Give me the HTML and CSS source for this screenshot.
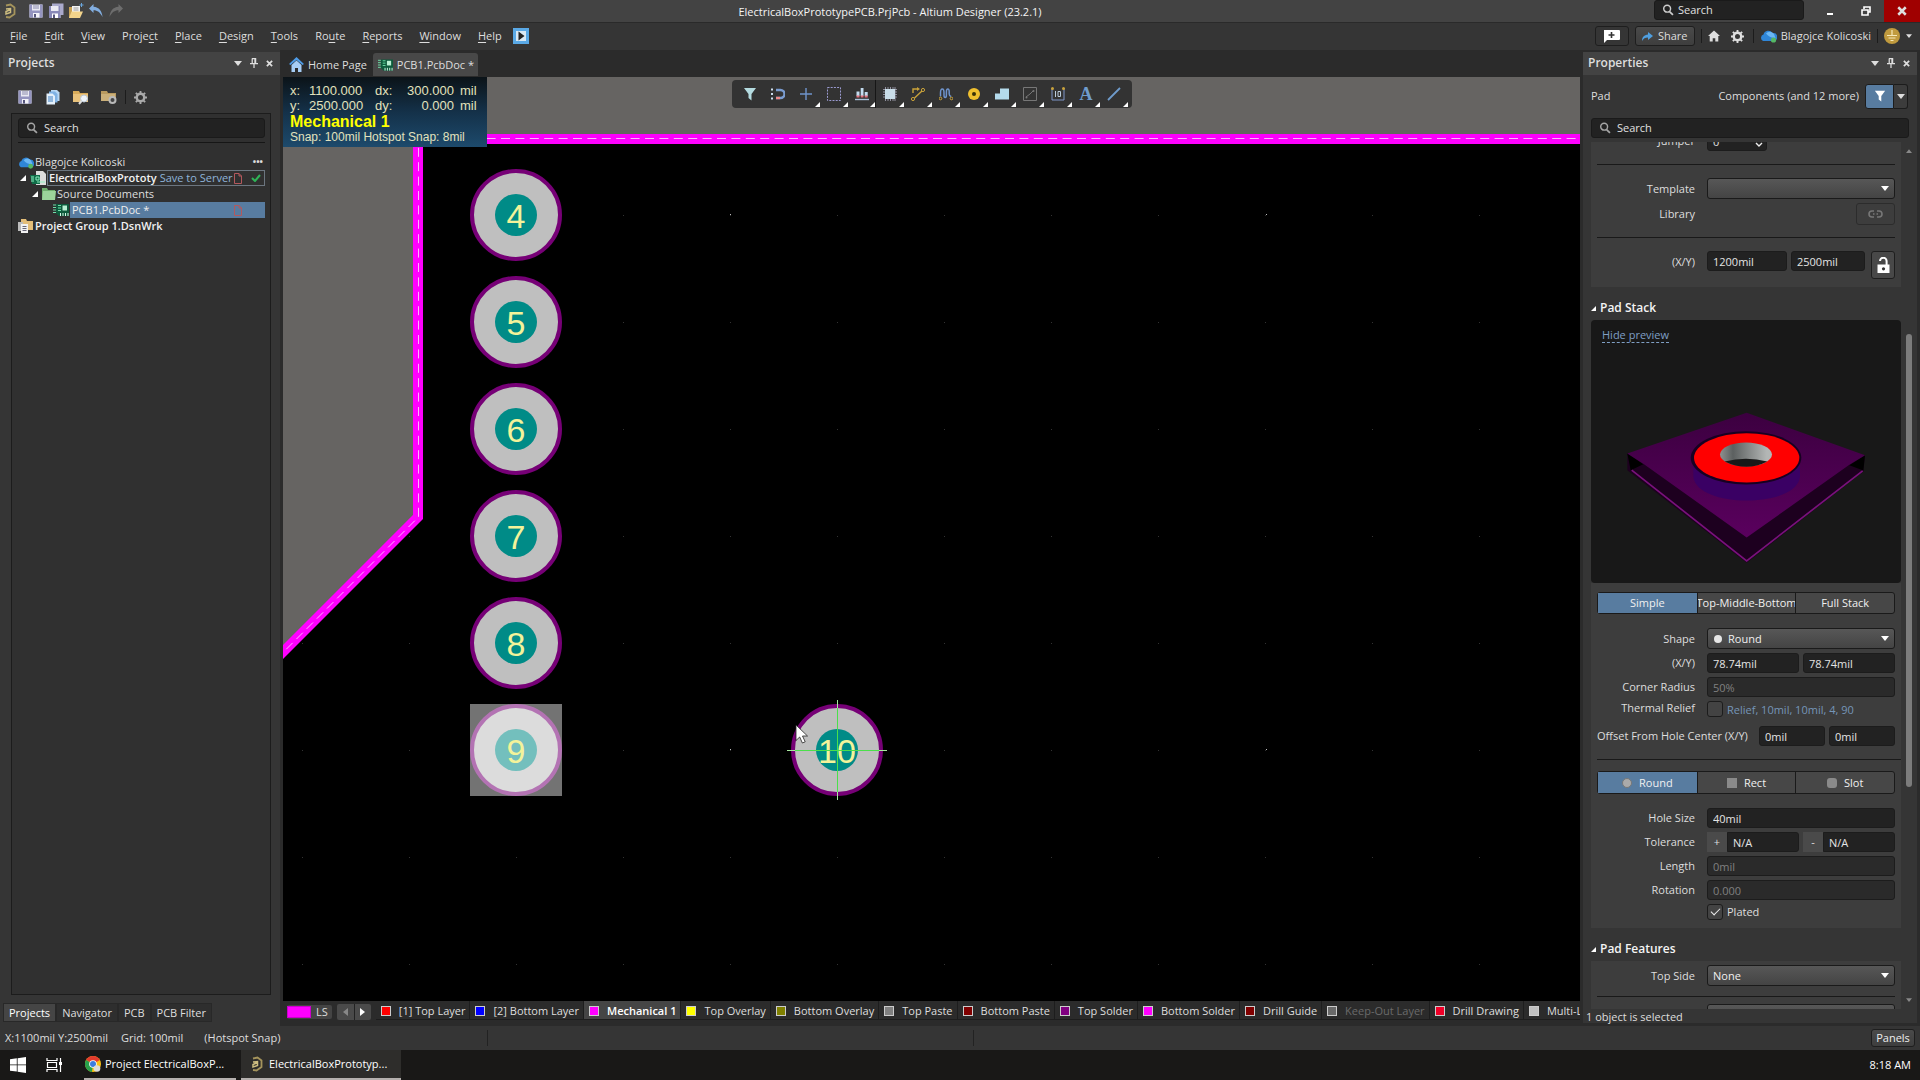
FILE: index.html
```html
<!DOCTYPE html>
<html lang="en">
<head>
<meta charset="utf-8">
<title>ElectricalBoxPrototypePCB.PrjPcb - Altium Designer (23.2.1)</title>
<link rel="stylesheet" href="styles.css">
</head>
<body>
<svg class="defs" aria-hidden="true">
  <symbol id="i-logo" viewBox="0 0 16 16"><path d="M4 2.500 8.500 1.500l4 3v6.500l-5 3.500L4 14" fill="none" stroke="#a5945c" stroke-width="1.800"/><path d="M4 6 8.500 5.500v4L4 11V8.500l4.500-2" fill="none" stroke="#cdbd80" stroke-width="1.500"/></symbol>
  <symbol id="i-save" viewBox="0 0 16 16"><path d="M1.500 1.500h13v13h-13z" fill="#e9e9f2"/><path d="M1.500 1.500h2.500v6h8v-6h2.500v13h-13z" fill="#9494bf"/><path d="M5 10h6.500v4.500H5z" fill="#f2f2f8"/><path d="M6 11h2v3.500H6z" fill="#55557c"/><path d="M5 3h6M5 5h6" stroke="#8b8bad"/></symbol>
  <symbol id="i-search" viewBox="0 0 14 14"><circle cx="6" cy="5.500" r="4" fill="none" stroke="currentColor" stroke-width="1.700"/><path d="m8.800 8.800 4 4" stroke="currentColor" stroke-width="2"/></symbol>
  <symbol id="i-down" viewBox="0 0 8 5"><path d="M0 0h8L4 5z" fill="currentColor"/></symbol>
  <symbol id="i-pin" viewBox="0 0 9 11"><path d="M2 .700h5M2.500 1v5M6 1v5M0 6.300h9M4.500 6.500V11" stroke="currentColor" stroke-width="1.400" fill="none"/><path d="M5 1h2v5H5z" fill="currentColor"/></symbol>
  <symbol id="i-x" viewBox="0 0 8 8"><path d="m1 1 6 6M7 1 1 7" stroke="currentColor" stroke-width="2"/></symbol>
  <symbol id="i-tri" viewBox="0 0 6 6"><path d="M6 0v6H0z" fill="currentColor"/></symbol>
  <symbol id="i-cloud" viewBox="0 0 17 14"><path d="M3 12a3.500 3.500 0 0 1 .500-6.500A5 5 0 0 1 12.500 4 4 4 0 0 1 14 12z" fill="#2f86d8"/><path d="M6 4.500A5 5 0 0 1 14 5l1.500 4C11 9 8 7 6 4.500z" fill="#6bb7f4"/><circle cx="13.500" cy="11" r="2.600" fill="#55b866"/></symbol>
  <symbol id="i-pcb" viewBox="0 0 16 12"><path d="M3 0h13v12H6l-3-3z" fill="#0e5a3c"/><path d="M0 1h3M0 3.500h3M0 6h3M0 8.500h3M5 1.500h3M5 4h3M5 6.500h3" stroke="#6fe0aa"/><path d="M9.500 1.500H14v5H9.500z" fill="#b9f0d3"/><path d="M7.500 9v3M10 9v3M12.500 9v3M15 9v3" stroke="#d8fbe8"/></symbol>
  <symbol id="i-doc" viewBox="0 0 8 11"><path d="M.500.500h4.500l2.500 2.500v7.500h-7zM5 .500V3h2.500" fill="none" stroke="#b4585c"/></symbol>
  <symbol id="i-home" viewBox="0 0 14 13"><path d="M7 0 0 6.500h2V13h3.500V9h3v4H12V6.500h2z" fill="currentColor"/></symbol>
  <symbol id="i-gear" viewBox="0 0 14 14"><circle cx="7" cy="7" r="4" fill="none" stroke="currentColor" stroke-width="2.600"/><path d="M7 0v3M7 11v3M0 7h3M11 7h3M2 2l2 2M10 10l2 2M12 2l-2 2M2 12l2-2" stroke="currentColor" stroke-width="2"/></symbol>
  <symbol id="i-filter" viewBox="0 0 14 14"><path d="M1 1h12L8.500 7v6.500L5.500 11V7z" fill="currentColor"/></symbol>
</svg>

<div class="app">
  <header class="titlebar">
    <div class="quick">
      <svg class="s16 logo"><use href="#i-logo"/></svg>
      <button aria-label="Save"><svg class="s16"><use href="#i-save"/></svg></button>
      <button aria-label="Save all"><svg class="s16" viewBox="0 0 16 16"><path d="M4 .500h11.500V12H4z" fill="#a9a9cc"/><path d="M1 3h11.500v12H1z" fill="#e9e9f2"/><path d="M1 3h2v5h7.500V3h2v12H1z" fill="#8989b8"/><path d="M4 10.500h6V15H4z" fill="#fff"/><path d="M5 11.500h2V15H5z" fill="#55557c"/></svg></button>
      <button aria-label="Open"><svg class="s16" viewBox="0 0 16 16"><path d="M1 4h5l1 1.500h5V15H1z" fill="#c9a255"/><path d="M4 3h8v7H4z" fill="#f3f3f3"/><path d="M5.500 5h5M5.500 7h5" stroke="#999"/><path d="M3.500 8.500H15L12 15H1z" fill="#f3d48b"/><path d="M13.500 0v4M11.500 2h4" stroke="#6aa6dc"/></svg></button>
      <button aria-label="Undo"><svg class="s16" viewBox="0 0 16 16"><path d="M5.500 1 1 5.500l4.500 4.500V7.300c4 0 6.500 2 9 6.700C14 8 11 4.200 5.500 3.800z" fill="#82aee0"/></svg></button>
      <button aria-label="Redo"><svg class="s16" viewBox="0 0 16 16"><path d="m10.500 1 4.500 4.500-4.500 4.500V7.300c-4 0-6.500 2-9 6.700C2 8 5 4.200 10.500 3.800z" fill="#6d6d6d"/></svg></button>
    </div>
    <h1>ElectricalBoxPrototypePCB.PrjPcb - Altium Designer (23.2.1)</h1>
    <div class="winctl">
      <label class="search top"><svg class="s12"><use href="#i-search"/></svg><input type="text" placeholder="Search" aria-label="Search application"></label>
      <button aria-label="Minimize"><svg width="8" height="10" viewBox="0 0 8 10"><path d="M1 8h6" stroke="#fff" stroke-width="2"/></svg></button>
      <button aria-label="Restore"><svg width="10" height="10" viewBox="0 0 10 10"><path d="M3 3V1h6v5H7" fill="none" stroke="#fff" stroke-width="1.600"/><path d="M1 4h6v5H1z" fill="none" stroke="#fff" stroke-width="1.600"/></svg></button>
      <button class="close" aria-label="Close"><svg width="10" height="10"><use href="#i-x"/></svg></button>
    </div>
  </header>

  <div class="menubar">
    <nav>
      <a href="#"><u>F</u>ile</a><a href="#"><u>E</u>dit</a><a href="#"><u>V</u>iew</a><a href="#">Proje<u>c</u>t</a><a href="#"><u>P</u>lace</a><a href="#"><u>D</u>esign</a><a href="#"><u>T</u>ools</a><a href="#">Ro<u>u</u>te</a><a href="#"><u>R</u>eports</a><a href="#"><u>W</u>indow</a><a href="#"><u>H</u>elp</a>
      <button class="play" aria-label="Tutorials"><svg width="16" height="16" viewBox="0 0 16 16"><path d="M0 0h16v16H0z" fill="#5aa9e6"/><path d="M3 3h10v10H3z" fill="#d9e9f5"/><path d="m5.500 3.500 6 4.500-6 4.500z" fill="#222"/></svg></button>
    </nav>
    <div class="account">
      <button class="btn comment" aria-label="Comment"><svg width="17" height="13" viewBox="0 0 17 13"><path d="M1 0h15q1 0 1 1v8q0 1-1 1H4l-3 3z" fill="#fff"/><path d="M8.500 2v6M5.500 5h6" stroke="#333" stroke-width="1.600"/></svg></button>
      <button class="btn share"><svg width="11" height="9" viewBox="0 0 11 9"><path d="m6 0 5 4-5 4V5.500C3 5.500 1.500 6.500 0 9c0-4 2-6 6-6.500z" fill="#4f9fe0"/></svg>Share</button>
      <i class="sep"></i>
      <button aria-label="Home"><svg width="12" height="12"><use href="#i-home"/></svg></button>
      <button class="cog" aria-label="Settings"><svg width="13" height="13"><use href="#i-gear"/></svg></button>
      <i class="sep"></i>
      <span class="user"><svg width="17" height="14"><use href="#i-cloud"/></svg>Blagojce Kolicoski</span>
      <i class="sep"></i>
      <svg width="16" height="16" viewBox="0 0 16 16"><circle cx="8" cy="8" r="8" fill="#c09a3e"/><path d="M8 2v5M3 7.500h10M4.500 10h7M6.500 12.500h3" stroke="#f6e8b8" stroke-width="1.200"/></svg>
      <button aria-label="Account menu"><svg width="6" height="4"><use href="#i-down"/></svg></button>
    </div>
  </div>

  <main>
    <aside class="left">
      <section class="panel">
        <header class="phead"><h2>Projects</h2>
          <button aria-label="Panel menu"><svg width="8" height="5"><use href="#i-down"/></svg></button>
          <button aria-label="Pin"><svg width="8" height="10"><use href="#i-pin"/></svg></button>
          <button aria-label="Close panel"><svg width="7" height="7"><use href="#i-x"/></svg></button>
        </header>
        <div class="ptools">
          <button aria-label="Save project"><svg class="s16"><use href="#i-save"/></svg></button>
          <button aria-label="Compile"><svg class="s16" viewBox="0 0 16 16"><path d="M6 1h6l2.500 2.500V12H6z" fill="#b9d7f2"/><path d="M4 2.500h6L12.500 5v8.500H4z" fill="#7fb2e4"/><path d="M1.500 4.500h6L10 7v8.500H1.500z" fill="#e4f0fb"/><path d="M3 8h5M3 10h5M3 12h5" stroke="#3f7fc0"/></svg></button>
          <button aria-label="Explore folder"><svg class="s16" viewBox="0 0 16 16"><path d="M0 2h6l1 2h8v9H0z" fill="#d8ab5a"/><path d="M0 5h15v8H0z" fill="#e9c27c"/><circle cx="11" cy="9.500" r="3.500" fill="#eef4fa" stroke="#b9c6d4"/><path d="M8.500 12 6 15" stroke="#ddd" stroke-width="2"/></svg></button>
          <button aria-label="Folder options"><svg class="s16" viewBox="0 0 16 16"><path d="M0 2h6l1 2h8v8H0z" fill="#b99a5f"/><path d="M0 5h14v7H0z" fill="#cbb07a"/><circle cx="11.500" cy="11" r="3" fill="#444" stroke="#b9b9b9" stroke-width="2"/></svg></button>
          <i class="sep"></i>
          <button class="dim" aria-label="Project settings"><svg width="13" height="13"><use href="#i-gear"/></svg></button>
        </div>
        <div class="treebox">
          <label class="search"><svg class="s12"><use href="#i-search"/></svg><input type="text" placeholder="Search" aria-label="Search projects"></label>
          <hr>
          <ul class="tree">
            <li><svg width="16" height="13"><use href="#i-cloud"/></svg><span>Blagojce Kolicoski</span><b class="dots">•••</b></li>
            <li class="l1"><svg class="tw"><use href="#i-tri"/></svg><svg width="16" height="14" viewBox="0 0 16 14"><path d="M6 0h7l3 3v11H6z" fill="#ddd"/><path d="M0 4h10v9H2z" fill="#0f6d49"/><path d="M1 6h3M1 8h3M1 10h3M6 6h3v3H6zM7 11h8" stroke="#8ff0c0" fill="none"/></svg><span class="boxed"><strong>ElectricalBoxPrototy</strong><em>Save to Server</em><svg class="dc"><use href="#i-doc"/></svg><svg width="10" height="8" viewBox="0 0 10 8"><path d="m1 4 3 3 5-6" fill="none" stroke="#2fb457" stroke-width="2"/></svg></span></li>
            <li class="l2"><svg class="tw"><use href="#i-tri"/></svg><svg width="14" height="12" viewBox="0 0 14 12"><path d="M0 0h5l1 2h7v10H0z" fill="#6fae6f"/><path d="M1 3h13l-1 9H0z" fill="#9bd39b"/></svg><span>Source Documents</span></li>
            <li class="l3"><svg width="16" height="12"><use href="#i-pcb"/></svg><span class="sel">PCB1.PcbDoc *<svg class="dc"><use href="#i-doc"/></svg></span></li>
            <li><svg width="16" height="14" viewBox="0 0 16 14"><path d="M3 0h5l1 2h6v9H3z" fill="#e3bd78"/><path d="M0 3h5v9H0z" fill="#bbb"/><path d="M3 5h7v9H3z" fill="#f2f2f2"/><path d="M4.500 7.500h4M4.500 9.500h4M4.500 11.500h4" stroke="#667"/></svg><strong>Project Group 1.DsnWrk</strong></li>
          </ul>
        </div>
      </section>
      <div class="ptabs"><button class="on">Projects</button><button>Navigator</button><button>PCB</button><button>PCB Filter</button></div>
    </aside>

    <section class="center">
      <div class="doctabs">
        <button><svg width="15" height="15" viewBox="0 0 15 15"><path d="M7.500 0 0 7l1.500 1 6-5 6 5L15 7z" fill="#4e9be6"/><path d="M2.500 8l5-4.500 5 4.500v7H9v-4H6v4H2.500z" fill="#a6cdf5"/></svg>Home Page</button>
        <button class="on"><svg width="15" height="12"><use href="#i-pcb"/></svg>PCB1.PcbDoc *</button>
      </div>
      <div class="canvas">
        <svg class="board" viewBox="283 77 1297 924" preserveAspectRatio="xMinYMin slice">
          <defs>
            <pattern id="grid" x="302" y="215" width="107" height="107" patternUnits="userSpaceOnUse"><path d="M0 0h1v1H0z" fill="#333"/></pattern>
            <g id="pad"><circle r="44" fill="#bfbfbf" stroke="#760076" stroke-width="4"/><circle r="21" fill="#008b87"/></g>
          </defs>
          <path d="M283 77h1297v924H283z" fill="#000"/>
          <path d="M283 77h1297v62H418v378L283 652z" fill="#666462"/>
          <path d="M418 139h1162v862H283V652l135-135z" fill="url(#grid)"/>
          <path d="M1590 139H418v378L278 657" fill="none" stroke="#f0f" stroke-width="10"/>
          <path d="M1590 138.500H418.500V517L278 657.500" fill="none" stroke="#ffb4ff" stroke-dasharray="9 5.400"/>
          <path d="M730 214h1v1h-1zM1266 214h1v1h-1zM730 749h1v1h-1zM1266 749h1v1h-1z" fill="#bbb"/>
          <g class="pads">
            <g transform="translate(516 215)"><use href="#pad"/><text y="13">4</text></g>
            <g transform="translate(516 322)"><use href="#pad"/><text y="13">5</text></g>
            <g transform="translate(516 429)"><use href="#pad"/><text y="13">6</text></g>
            <g transform="translate(516 536)"><use href="#pad"/><text y="13">7</text></g>
            <g transform="translate(516 643)"><use href="#pad"/><text y="13">8</text></g>
            <g transform="translate(516 750)"><use href="#pad"/><path d="M-46-46h92v92h-92z" fill="#fff" opacity=".45"/><text y="13">9</text></g>
            <g transform="translate(837 750)"><use href="#pad"/><text y="13">10</text><path d="M-50 .500H50M.500-50V50" stroke="#a8e8a0"/><path d="M-42 .500H42M.500-42V42" stroke="#4be04b"/></g>
          </g>
          <path d="M796 725v15.500l3.700-3.500 2.700 6 2.800-1.200-2.700-5.800h5z" fill="#fff" stroke="#222" stroke-width=".800"/>
        </svg>
        <div class="hud">
          <dl><dt>x:</dt><dd>1100.000</dd><dt>dx:</dt><dd>300.000</dd><dd>mil</dd><dt>y:</dt><dd>2500.000</dd><dt>dy:</dt><dd>0.000</dd><dd>mil</dd></dl>
          <strong>Mechanical 1</strong>
          <small>Snap: 100mil Hotspot Snap: 8mil</small>
        </div>
        <div class="tools">
          <button class="nt" aria-label="Filter"><svg viewBox="0 0 14 14" color="#b4dbe0"><use href="#i-filter"/></svg></button>
          <button class="nt" aria-label="Snap"><svg viewBox="0 0 14 14"><path d="M5 3h4.500a4 4 0 0 1 0 8H5" fill="none" stroke="#7a9cd0" stroke-width="2.400"/><path d="M9 11H5" stroke="#e88" stroke-width="2.400"/><path d="M0 2.500h2M0 7h2M0 11.500h2" stroke="#cde" stroke-width="2"/></svg></button>
          <button aria-label="Move"><svg viewBox="0 0 14 14"><path d="M7 1v12M1 7h12" stroke="#6f94cc" stroke-width="1.400"/></svg></button>
          <button aria-label="Select"><svg viewBox="0 0 14 14"><path d="M.500.500h13v13H.500z" fill="none" stroke="#9a9ad0" stroke-dasharray="2 1.200"/></svg></button>
          <button class="div" aria-label="Align"><svg viewBox="0 0 14 14"><path d="M1.500 4.500h3V9h-3zM5.700 1h2.800v8H5.700zM9.700 5h3v4h-3z" fill="#c3dcf0"/><path d="M1.500 9.500h3M5.700 9.500h2.800M9.700 9.500h3" stroke="#e0707c" stroke-width="2"/><path d="M0 12.500h14" stroke="#a9c3dc" stroke-width="1.400"/></svg></button>
          <button aria-label="Component"><svg viewBox="0 0 14 14"><path d="M0 2.500h14M0 5h14M0 7.500h14M0 10h14M2.500 0v14M5 0v14M7.500 0v14M10 0v14M12 0v14" stroke="#aab" stroke-width=".800"/><path d="M2 2h10v10H2z" fill="#c9dde8"/></svg></button>
          <button aria-label="Route"><svg viewBox="0 0 14 14"><path d="M2 6V2h5M3.500 11 11 4" fill="none" stroke="#c9a23a" stroke-width="1.400"/><path d="m6 0 3 2-3 2z" fill="#c9a23a"/><circle cx="2" cy="12" r="1.600" fill="none" stroke="#c9a23a"/><circle cx="12" cy="3" r="1.600" fill="none" stroke="#c9a23a"/></svg></button>
          <button aria-label="Tune"><svg viewBox="0 0 14 14"><path d="M1.500 9.500V6q0-4 1.800-4T5 6v2q0 2.500 1.200 2.500T7.400 8V5q0-3 1.400-3t1.400 3v2q0 2 2 2.500" fill="none" stroke="#6f94cc" stroke-width="1.500"/><circle cx="1.500" cy="11.500" r="1.300" fill="none" stroke="#c9a23a"/><circle cx="12.500" cy="11.500" r="1.300" fill="none" stroke="#c9a23a"/></svg></button>
          <button aria-label="Via"><svg viewBox="0 0 14 14"><circle cx="7" cy="7" r="6" fill="#f0c02e"/><circle cx="7" cy="7" r="2" fill="#3a3208"/></svg></button>
          <button aria-label="Polygon"><svg viewBox="0 0 14 14"><path d="M0 12.500V6.500h5V1.500h9v11z" fill="#b4dbec"/></svg></button>
          <button aria-label="Room"><svg viewBox="0 0 14 14"><path d="M.500.500h13v13H.500zM3 10l4-3 3-3" fill="none" stroke="#777"/><circle cx="3.500" cy="10.500" r="1" fill="#777"/><circle cx="10.500" cy="4" r="1" fill="#777"/></svg></button>
          <button aria-label="Dimension"><svg viewBox="0 0 14 14"><path d="M1 1v12h12V1" fill="none" stroke="#7f96c8"/><path d="M4.500 4v6M7 4.500h2.500v5H7z" fill="none" stroke="#bcd"/><circle cx="1.500" cy="1.500" r="1.500" fill="#c9a23a"/><circle cx="12.500" cy="1.500" r="1.500" fill="#c9a23a"/></svg></button>
          <button class="ta" aria-label="Text">A</button>
          <button aria-label="Line"><svg viewBox="0 0 14 14"><path d="M1 13 13 1" stroke="#6f9ccc" stroke-width="1.800"/></svg></button>
        </div>
      </div>
      <div class="layers">
        <button class="ls"><i class="c-m"></i>LS</button>
        <span class="arrows"><button aria-label="Previous layer" class="off"><svg width="5" height="8" viewBox="0 0 5 8"><path d="M5 0v8L0 4z" fill="currentColor"/></svg></button><button aria-label="Next layer"><svg width="5" height="8" viewBox="0 0 5 8"><path d="M0 0v8l5-4z" fill="currentColor"/></svg></button></span>
        <button class="lay"><i class="c-red"></i>[1] Top Layer</button>
        <button class="lay"><i class="c-blue"></i>[2] Bottom Layer</button>
        <button class="lay on"><i class="c-m"></i>Mechanical 1</button>
        <button class="lay"><i class="c-yel"></i>Top Overlay</button>
        <button class="lay"><i class="c-olive"></i>Bottom Overlay</button>
        <button class="lay"><i class="c-gray"></i>Top Paste</button>
        <button class="lay"><i class="c-mar"></i>Bottom Paste</button>
        <button class="lay"><i class="c-pur"></i>Top Solder</button>
        <button class="lay"><i class="c-m"></i>Bottom Solder</button>
        <button class="lay"><i class="c-mar"></i>Drill Guide</button>
        <button class="lay off"><i class="c-dim"></i>Keep-Out Layer</button>
        <button class="lay"><i class="c-crim"></i>Drill Drawing</button>
        <button class="lay"><i class="c-sil"></i>Multi-Layer</button>
      </div>
    </section>

    <aside class="panel props">
      <header class="phead"><h2>Properties</h2>
        <button aria-label="Panel menu"><svg width="8" height="5"><use href="#i-down"/></svg></button>
        <button aria-label="Pin"><svg width="8" height="10"><use href="#i-pin"/></svg></button>
        <button aria-label="Close panel"><svg width="7" height="7"><use href="#i-x"/></svg></button>
      </header>
      <div class="scope"><span>Pad</span><span class="what">Components (and 12 more)</span><button class="flt" aria-label="Selection filter"><svg width="12" height="12"><use href="#i-filter"/></svg></button><button class="fdd" aria-label="Filter options"><svg width="8" height="5"><use href="#i-down"/></svg></button></div>
      <label class="search"><svg class="s12"><use href="#i-search"/></svg><input type="text" placeholder="Search" aria-label="Search properties"></label>
      <div class="scroll">
        <div class="body">
          <div class="sect first">
            <div class="row"><label for="jump">Jumper</label><span class="spin"><input id="jump" type="text" value="0"><svg width="8" height="5" viewBox="0 0 8 5"><path d="m1 1 3 3 3-3" fill="none" stroke="#eee" stroke-width="1.400"/></svg></span></div>
            <hr>
            <div class="row"><label for="tpl">Template</label><span class="dd"><select id="tpl"><option></option></select><svg width="8" height="5"><use href="#i-down"/></svg></span></div>
            <div class="row lib"><label for="libb">Library</label><button id="libb" class="link" aria-label="Library link"><svg width="15" height="8" viewBox="0 0 15 8"><path d="M6 1H4a3 3 0 0 0 0 6h2M9 1h2a3 3 0 0 1 0 6H9M5 4h1.500M8.500 4H10" fill="none" stroke="#777" stroke-width="1.600"/></svg></button></div>
            <hr>
            <div class="row xy"><label for="px">(X/Y)</label><input id="px" type="text" value="1200mil"><input class="y1" type="text" value="2500mil" aria-label="Y"><button class="lock" aria-label="Unlock"><svg width="13" height="17" viewBox="0 0 13 17"><path d="M3 4a3.300 3.300 0 0 1 6.600 0v4" fill="none" stroke="#fff" stroke-width="2"/><path d="M.500 7.500h12V16H.500z" fill="#fff"/><circle cx="6.500" cy="11.800" r="1.600" fill="#333"/></svg></button></div>
          </div>
          <h3><svg class="tw"><use href="#i-tri"/></svg>Pad Stack</h3>
          <div class="preview">
            <a href="#">Hide preview</a>
            <svg viewBox="93 90 930 788">
              <defs>
                <linearGradient id="top" x1="0" y1="0" x2="0" y2="1"><stop offset="0" stop-color="#3c0040"/><stop offset="1" stop-color="#5a005e"/></linearGradient>
                <linearGradient id="barrel"><stop offset="0" stop-color="#8d9190"/><stop offset=".25" stop-color="#5c6060"/><stop offset=".9" stop-color="#b3b6b5"/></linearGradient>
              </defs>
              <path d="M202 490v50l358 278 350-275 5-48z" fill="#1d001f"/>
              <path d="M202 490l10 50 38-18zM915 495l-5 46-42-16z" fill="#000"/>
              <path d="M215 540l345 272 348-270" fill="none" stroke="#7a117c" stroke-width="5"/>
              <path d="M560 368 202 490l50 32 308 220 308-218 47-29z" fill="url(#top)"/>
              <path d="M400 510v50c10 95 310 95 320 0v-50z" fill="#3a0064"/>
              <ellipse cx="558" cy="503" rx="166" ry="80" fill="#180022"/>
              <ellipse cx="560" cy="503" rx="158" ry="74" fill="#f00"/>
              <ellipse cx="558" cy="493" rx="78" ry="36" fill="url(#barrel)"/>
              <path d="M494 514q64-16 128 0-62 32-128 0z" fill="#181818"/>
            </svg>
          </div>
          <div class="sect stack">
            <div class="seg"><button class="on">Simple</button><button>Top-Middle-Bottom</button><button>Full Stack</button></div>
            <div class="row"><label for="shape">Shape</label><span class="dd dot"><select id="shape"><option>Round</option></select><svg width="8" height="5"><use href="#i-down"/></svg></span></div>
            <div class="row"><label for="sx">(X/Y)</label><input id="sx" type="text" value="78.74mil"><input type="text" value="78.74mil" aria-label="Size Y"></div>
            <div class="row"><label for="cr">Corner Radius</label><input id="cr" type="text" value="50%" disabled></div>
            <div class="row chk"><label for="tr">Thermal Relief</label><input id="tr" type="checkbox"><a href="#">Relief, 10mil, 10mil, 4, 90</a></div>
            <div class="row off"><label for="ox">Offset From Hole Center (X/Y)</label><input id="ox" type="text" value="0mil"><input type="text" value="0mil" aria-label="Offset Y"></div>
            <hr>
            <div class="seg hole"><button class="on"><i class="rd"></i>Round</button><button><i></i>Rect</button><button><i class="sl"></i>Slot</button></div>
            <div class="row"><label for="hs">Hole Size</label><input id="hs" type="text" value="40mil"></div>
            <div class="row tol"><label for="tp">Tolerance</label><span><button>+</button><input id="tp" type="text" value="N/A"></span><span><button>-</button><input type="text" value="N/A" aria-label="Minus tolerance"></span></div>
            <div class="row"><label for="ln">Length</label><input id="ln" type="text" value="0mil" disabled></div>
            <div class="row"><label for="rt">Rotation</label><input id="rt" type="text" value="0.000" disabled></div>
            <div class="row plated"><input id="pl" type="checkbox" checked><label for="pl">Plated</label></div>
          </div>
          <h3><svg class="tw"><use href="#i-tri"/></svg>Pad Features</h3>
          <div class="sect feat">
            <div class="row"><label for="ts">Top Side</label><span class="dd"><select id="ts"><option>None</option></select><svg width="8" height="5"><use href="#i-down"/></svg></span></div>
            <hr>
            <div class="row next"><span class="dd"><select aria-label="Bottom Side"><option></option></select></span></div>
          </div>
        </div>
        <div class="bar"><svg width="6" height="4" viewBox="0 0 8 5"><path d="M0 5h8L4 0z" fill="#888"/></svg><i></i><svg width="6" height="4" color="#888"><use href="#i-down"/></svg></div>
      </div>
      <p class="selinfo">1 object is selected</p>
    </aside>
  </main>

  <footer class="status"><span>X:1100mil Y:2500mil</span><span>Grid: 100mil</span><span class="hot">(Hotspot Snap)</span><i></i><i></i><button class="btn">Panels</button></footer>

  <div class="taskbar">
    <button class="start" aria-label="Start"><svg width="16" height="16" viewBox="0 0 16 16"><path d="M0 2.300 6.800 1.300v6.200H0zM7.600 1.200 16 0v7.500H7.600zM0 8.300h6.800v6.300L0 13.700zM7.600 8.300H16V16l-8.400-1.200z" fill="#fff"/></svg></button>
    <button class="view" aria-label="Task view"><svg width="16" height="16" viewBox="0 0 16 16"><path d="M1 1v2.500h10V1M1.500 5.500h9v5h-9zM1 15v-2.500h10V15M14.500 1v14" fill="none" stroke="#fff" stroke-width="1.200"/><path d="M13 5h3v3h-3z" fill="#fff"/></svg></button>
    <button class="task"><svg width="16" height="16" viewBox="0 0 16 16"><circle cx="8" cy="8" r="8" fill="#fbc116"/><path d="M8 8 1.100 4A8 8 0 0 1 14.900 4z" fill="#e33b2e"/><path d="M8 8 1.100 4A8 8 0 0 0 7 16z" fill="#27a04b"/><circle cx="8" cy="8" r="3.800" fill="#fff"/><circle cx="8" cy="8" r="3" fill="#3b7de0"/><circle cx="12" cy="12.500" r="3.300" fill="#dcdcd8"/></svg>Project ElectricalBoxP...</button>
    <button class="task on"><svg width="16" height="16"><use href="#i-logo"/></svg>ElectricalBoxPrototyp...</button>
    <time>8:18 AM</time>
  </div>
</div>
</body>
</html>
```
FILE: styles.css
```css
*{box-sizing:border-box}
body{margin:0;background:#2b2b2b;color:#dedede;font:11px/16px "Open Sans","Noto Sans",sans-serif;overflow:hidden}
button,input,select{font:inherit;color:inherit;margin:0;padding:0;border:0;background:none;border-radius:0;outline:0}
button{display:flex;align-items:center;justify-content:center;white-space:nowrap}
h1,h2,h3,p,ul,dl,dd{margin:0;padding:0}
a{color:inherit;text-decoration:none}
strong,h2,h3{font-weight:600}
svg{display:block;flex:none}
hr{border:0;height:1px;background:#161616;margin:0}
.defs{position:absolute;width:0;height:0}
.s16{width:16px;height:16px}
.s12{width:12px;height:12px}
.sep{width:1px;height:14px;background:#1c1c1c}
.app{display:flex;flex-direction:column;height:100vh}

.titlebar{display:grid;grid-template-columns:1fr auto 1fr;align-items:center;height:22px;flex:none;background:#434343}
.titlebar h1{font-size:11px;font-weight:400;color:#f4f4f4;padding:2px 140px 0 0}
.quick{display:flex;gap:4px;padding-left:2px}
.quick .logo{margin-right:6px}
.winctl{display:flex;justify-content:flex-end;height:22px}
.winctl button{width:36px}
.winctl .close{background:#a00000}
.winctl .search.top{width:150px;height:20px;margin-right:8px}
.search{display:flex;align-items:center;gap:6px;height:20px;padding:0 7px;background:#222;border:1px solid #1a1a1a;border-radius:3px;color:#a5a5a5}
.search input{flex:1;min-width:0;color:#e0e0e0}
.search input::placeholder{color:#e0e0e0;opacity:1}
.search.top{gap:4px;color:#ccc}

.menubar{display:flex;justify-content:space-between;height:28px;flex:none;background:#353535;border-top:1px solid #2a2a2a}
.menubar nav,.account{display:flex;align-items:center}
.menubar nav{gap:17px;padding:0 0 1px 10px}
.menubar .play{margin-left:-6px}
.menubar u{text-underline-offset:2px}
.account{gap:6px;padding:0 8px 1px 0}
.cog{margin:0 3px 0 5px}
.btn{background:linear-gradient(#4a4a4a,#3e3e3e);border:1px solid #1e1e1e;border-radius:3px;height:20px}
.comment{width:34px;background:#353535}
.share{width:60px;gap:5px}
.user{display:flex;align-items:center;gap:4px}

main{display:flex;flex:1;min-height:0;background:#2b2b2b}
.left{display:flex;flex-direction:column;width:280px;padding:2px 0 0 3px;flex:none;margin-right:3px;background:#353535}
.panel{display:flex;flex-direction:column;background:#353535;min-height:0}
.left .panel{flex:1}
.phead{display:flex;align-items:center;gap:8px;height:23px;padding:0 7px 1px 5px;background:#434343;flex:none}
.phead h2{flex:1;font-size:12px}
.ptools{display:flex;align-items:center;gap:12px;height:38px;padding:6px 0 0 14px;flex:none}
.ptools .sep{margin:0 -4px 0 -4px}
.ptools .dim{color:#aaa}
.treebox{flex:1;margin:0 9px 8px 8px;border:1px solid #1c1c1c;padding:4px 5px 4px 6px;background:#303030}
.treebox hr{margin:4px 0 11px}
.tree{list-style:none}
.tree li{display:flex;align-items:center;gap:1px;height:16px}
.dots{margin-left:auto;padding-right:2px;font-size:9px}
.tw{width:6px;height:6px;color:#fff}
.l1{padding-left:2px}
.l1 .tw{margin-right:3px}
.l2{padding-left:14px}
.l2 .tw{margin-right:3px}
.l3{padding-left:35px}
.boxed{display:flex;align-items:center;flex:1;height:16px;border:1px solid #6c7680;padding:0 3px 0 1px;white-space:nowrap}
.boxed em{font-style:normal;color:#8fb4da;margin-left:3px}
.boxed .dc{margin:0 9px 0 auto}
.dc{width:8px;height:11px}
.sel{display:flex;align-items:center;flex:1;height:16px;background:#587ca0;padding:0 23px 0 2px;color:#eee}
.sel .dc{margin-left:auto}
.tree strong{color:#f2f2f2}
.ptabs{display:flex;height:23px;flex:none;padding-bottom:4px;align-items:stretch}
.ptabs button{padding:0 5px;background:#2e2e2e;border:1px solid #282828}
.ptabs .on{background:#454545;color:#fff}

.center{display:flex;flex-direction:column;flex:1;min-width:0}
.doctabs{display:flex;height:27px;padding:3px 0 1px;flex:none}
.doctabs button{gap:4px;padding:0 6px;border-radius:3px 3px 0 0}
.doctabs .on{background:#484848;padding:0 4px 0 5px}
.canvas{position:relative;flex:1;min-height:0;background:#000;overflow:hidden}
.board{width:100%;height:100%}
.pads text{font:34px "Liberation Sans Narrow","Liberation Sans",sans-serif;fill:#f3f39a;text-anchor:middle}
.hud{position:absolute;left:0;top:0;width:204px;height:70px;padding:6px 7px;background:linear-gradient(#0b1318,#143149 50%,#1d4a6c);color:#e2e2bd;font:13px/15px "Liberation Sans",Arial,sans-serif}
.hud dl{display:grid;grid-template-columns:19px 66px 28px 57px auto}
.hud dd:nth-of-type(3n+2){text-align:right;padding-right:6px}
.hud strong{display:block;color:#ff0;font-size:16px;font-weight:700;line-height:17px}
.hud small{display:block;font-size:12px;line-height:14px;white-space:nowrap}
.tools{position:absolute;left:449px;top:3px;display:flex;height:28px;padding:0 4px;background:#333;border-radius:4px}
.tools button{position:relative;width:28px;height:28px}
.tools svg{width:14px;height:14px}
.tools button:not(.nt)::after{content:"";position:absolute;right:0;bottom:1px;width:5px;height:5px;background:#fff;clip-path:polygon(100% 0,100% 100%,0 100%)}
.tools .div{border-right:1px solid #161616}
.tools .ta{font:bold 18px "Liberation Serif",serif;color:#6f9ccc}
.layers{display:flex;height:25px;padding:0 0 6px 4px;flex:none;overflow:hidden;background:#2b2b2b}
.layers i{width:10px;height:10px;border:1px solid #ccc}
.ls{height:14px;margin:4px 5px 0 0;background:#444;border-radius:2px;padding-right:4px;gap:5px}
.layers .ls i{width:24px;height:12px;border:1px solid #c0c}
.arrows{display:flex;height:16px;margin:3px 5px 0 0;background:#4a4a4a;border-radius:2px}
.arrows button{width:17px;color:#fff}
.arrows button+button{border-left:1px solid #222}
.arrows .off{color:#888}
.lay{gap:8px;padding:1px 4px 0 5px;border-right:1px solid #1d1d1d;border-bottom:1px solid #1d1d1d;flex:none}
.lay.on{background:#454545;color:#fff;font-weight:600}
.lay.off{color:#6a6a6a}
.c-m{background:#f0f}.c-red{background:#f00}.c-blue{background:#00f}.c-yel{background:#ff0}.c-olive{background:#808000}.c-gray{background:#808080}.c-mar{background:#800000}.c-pur{background:#800080}.c-dim{background:#6a6a6a}.c-crim{background:#f00028}.c-sil{background:#c0c0c0}

.props{width:334px;margin:2px 3px 3px 3px;flex:none}
.scope{display:flex;align-items:center;height:43px;padding:0 9px 1px 8px;flex:none}
.scope .what{margin-left:auto;padding-right:6px}
.flt{width:29px;height:25px;background:#587ca0;border:1px solid #1c1c1c;border-radius:3px 0 0 3px;color:#fff}
.fdd{width:14px;height:25px;background:#3c3c3c;border:1px solid #1c1c1c;border-left:0;border-radius:0 3px 3px 0}
.props>.search{margin:0 8px 4px;flex:none}
.scroll{display:flex;flex:1;min-height:0;overflow:hidden;padding-left:8px}
.body{width:310px;flex:none}
.sect{background:#3d3d3d;padding:0 6px}
.sect hr{background:#191919}
.first{margin-top:-11px;padding-bottom:8px}
.first hr{margin:13px 0}
.first .lib+hr{margin-top:12px}
.row{display:flex;align-items:center;gap:4px;margin-top:4px;height:20px}
.row>label{width:98px;margin-right:8px;text-align:right;flex:none;white-space:nowrap}
.row input[type=text]{flex:1;min-width:0;width:0;height:20px;background:#222;border:1px solid #1c1c1c;border-radius:3px;padding:0 5px;color:#e4e4e4}
.row input[type=text]:disabled{color:#808080;background:#2a2a2a}
.first .row:first-child{margin-top:0}
.spin{position:relative;display:flex;width:60px}
.spin svg{position:absolute;right:4px;bottom:4px}
.dd{position:relative;flex:1;display:flex}
.dd select{appearance:none;flex:1;height:21px;border:1px solid #1a1a1a;border-radius:3px;background:linear-gradient(#575757,#444);padding:0 5px;color:#f0f0f0}
.dd svg{position:absolute;right:6px;top:8px;color:#fff}
.dot select{padding-left:20px}
.dot::before{content:"";position:absolute;left:7px;top:7px;width:8px;height:8px;border-radius:50%;background:#e6e6e6}
.row:has(.dd){height:21px}
.first hr+.row{margin-top:0}
.lib{height:22px}
.link{margin-left:auto;width:39px;height:22px;border:1px solid #2c2c2c;border-radius:3px}
.xy{height:28px;align-items:flex-start}
.xy label{line-height:22px}
.row .y1[type=text]{flex:none;width:74px;margin-right:2px}
.lock{width:24px;height:28px;background:#484848;border:1px solid #1e1e1e;border-radius:3px}
h3{display:flex;align-items:center;gap:4px;height:33px;padding:9px 0 0;font-size:12px;color:#f4f4f4}
h3 .tw{width:5px;height:5px}
.preview{position:relative;height:263px;background:#181818;border-radius:4px}
.preview svg{width:310px;height:263px}
.preview a{position:absolute;left:11px;top:7px;color:#7f9fc4;border-bottom:1px dashed #7f9fc4;line-height:15px}
.stack{padding-top:9px;padding-bottom:8px}
.seg{display:grid;grid-template-columns:1fr 1fr 1fr;height:22px;margin-bottom:14px;border:1px solid #1a1a1a;border-radius:3px;background:#474747;color:#f0f0f0}
.seg button{overflow:hidden;gap:7px}
.seg button+button{border-left:1px solid #1a1a1a}
.seg .on{background:#587ca0}
.seg+.row{margin-top:0}
.hole{height:23px}
.seg i{width:10px;height:10px;background:#8a8a8a}
.seg .rd{border-radius:50%;background:#aaa;border:1px solid #777}
.seg .sl{border-radius:3px}
.chk{height:18px;align-items:flex-start}
.chk label{line-height:14px}
.row input[type=checkbox]{appearance:none;width:16px;height:16px;border:1px solid #1c1c1c;border-radius:3px;background:#434343;flex:none}
.row input[type=checkbox]:checked{display:grid;place-items:center}
.row input[type=checkbox]:checked::after{content:"";width:8px;height:4px;border:solid #eee;border-width:0 0 1px 1px;rotate:-45deg;margin-bottom:3px}
.chk a{color:#7595b8;line-height:18px}
.row.off{margin-top:7px}
.row.off label{width:150px;margin-right:8px;text-align:left}
.stack hr{margin:13px -6px 11px 0}
.tol span{display:flex;flex:1}
.tol span button{width:20px;height:20px;background:#4a4a4a}
.tol input[type=text]{border-radius:0 3px 3px 0}
.plated{height:16px;padding-left:110px}
.plated label{width:auto;margin:0}
.feat{padding-top:4px}
.feat .row:first-child{margin-top:0}
.feat hr{margin:10px 0 7px}
.next{padding-left:110px}
.bar{display:flex;flex-direction:column;align-items:center;width:16px;padding:7px 0}
.bar i{width:6px;height:453px;margin:181px 0 auto;border-radius:3px;background:#7c7c7c}
.selinfo{padding-left:3px;line-height:16px;height:14px}

.status{display:flex;align-items:center;height:24px;flex:none;padding:0 5px;background:#353535;gap:13px}
.status .hot{margin-left:8px}
.status i{width:1px;height:16px;background:#222}
.status i:nth-of-type(1){margin-left:194px}
.status i:nth-of-type(2){margin-left:472px}
.status .btn{margin-left:auto;width:44px;height:18px;color:#eee}
.taskbar{display:flex;height:30px;flex:none;background:#191817;color:#fff;align-items:stretch;padding-right:9px}
.start{width:32px;padding-left:4px}
.view{width:32px;margin:0 14px 0 6px}
.task{width:152px;gap:4px;margin-right:5px;border-bottom:2px solid #b5b0ae;justify-content:flex-start;padding-left:1px}
.task.on{width:160px;background:#2e2d2b;padding-left:8px}
.taskbar time{margin-left:auto;align-self:center}
```
